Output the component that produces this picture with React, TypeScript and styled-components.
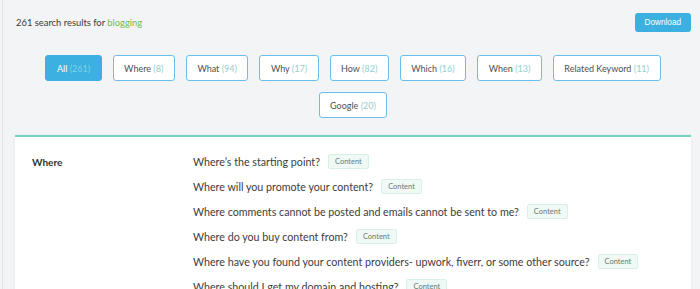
import React from "react";
import styled, { createGlobalStyle } from "styled-components";

const Global = createGlobalStyle`
  html, body { margin: 0; padding: 0; background: #f3f4f6; }
  body { font-family: Lato, "Open Sans", sans-serif; overflow: hidden; }
`;

const Page = styled.div`
  margin-left: 2px;
  border-left: 1px solid #e2e4e8;
  height: 289px;
  padding: 0 9px 0 12px;
  box-sizing: border-box;
`;

const Header = styled.div`
  display: flex;
  align-items: center;
  justify-content: space-between;
  height: 45px;
  padding: 0 0 0 1px;
`;

const Title = styled.div`
  font-size: 9.4px;
  color: #3a3a3a;
  span { color: #6cbf4a; }
`;

const DownloadBtn = styled.button`
  height: 19px;
  padding: 0 10px;
  border: none;
  border-radius: 3px;
  background: #3bb0e1;
  color: #ffffff;
  font-family: "Liberation Sans", Arial, sans-serif;
  font-size: 8.2px;
`;

const Tabs = styled.div`
  display: flex;
  flex-wrap: wrap;
  justify-content: center;
  gap: 11px 11px;
  margin-top: 10px;
  padding: 0 20px;
`;

const Tab = styled.button<{ $active?: boolean }>`
  height: 26px;
  padding: 0 10.5px;
  box-sizing: border-box;
  border-radius: 3px;
  border: 1.5px solid ${(p) => (p.$active ? "#3bb0e1" : "#69bfea")};
  background: ${(p) => (p.$active ? "#3bb0e1" : "#ffffff")};
  color: ${(p) => (p.$active ? "#ffffff" : "#505050")};
  font-family: Lato, sans-serif;
  font-size: 9px;
  span { color: ${(p) => (p.$active ? "#7fd2ee" : "#94cfd0")}; }
`;

const Card = styled.div`
  margin-top: 17px;
  background: #ffffff;
  border-top: 2px solid #74d3c3;
  box-shadow: 0 0 3px rgba(0, 0, 0, 0.06);
  display: grid;
  grid-template-columns: 161px 1fr;
  padding: 15px 0 0 17px;
`;

const GroupLabel = styled.div`
  font-size: 10px;
  font-weight: 700;
  color: #333333;
  padding-top: 4px;
`;

const List = styled.div`
  display: flex;
  flex-direction: column;
  gap: 6px;
`;

const Row = styled.div`
  display: flex;
  align-items: center;
  gap: 8px;
  height: 19px;
`;

const Question = styled.span`
  font-size: 10.7px;
  color: #3c3c3c;
  white-space: nowrap;
`;

const Badge = styled.span`
  font-size: 7.5px;
  color: #6b7a74;
  background: #eff9f5;
  border: 1px solid #d9f0e7;
  border-radius: 2px;
  padding: 0 6px;
  height: 13px;
  line-height: 13px;
`;

const tabs: [string, number][] = [
  ["All", 261],
  ["Where", 8],
  ["What", 94],
  ["Why", 17],
  ["How", 82],
  ["Which", 16],
  ["When", 13],
  ["Related Keyword", 11],
  ["Google", 20],
];

const questions = [
  "Where\u2019s the starting point?",
  "Where will you promote your content?",
  "Where comments cannot be posted and emails cannot be sent to me?",
  "Where do you buy content from?",
  "Where have you found your content providers- upwork, fiverr, or some other source?",
  "Where should I get my domain and hosting?",
];

export default function App() {
  return (
    <>
      <Global />
      <Page>
        <Header>
          <Title>
            261 search results for <span>blogging</span>
          </Title>
          <DownloadBtn>Download</DownloadBtn>
        </Header>
        <Tabs>
          {tabs.map(([name, n], i) => (
            <Tab key={name} $active={i === 0}>
              {name} <span>({n})</span>
            </Tab>
          ))}
        </Tabs>
        <Card>
          <GroupLabel>Where</GroupLabel>
          <List>
            {questions.map((q) => (
              <Row key={q}>
                <Question>{q}</Question>
                <Badge>Content</Badge>
              </Row>
            ))}
          </List>
        </Card>
      </Page>
    </>
  );
}
